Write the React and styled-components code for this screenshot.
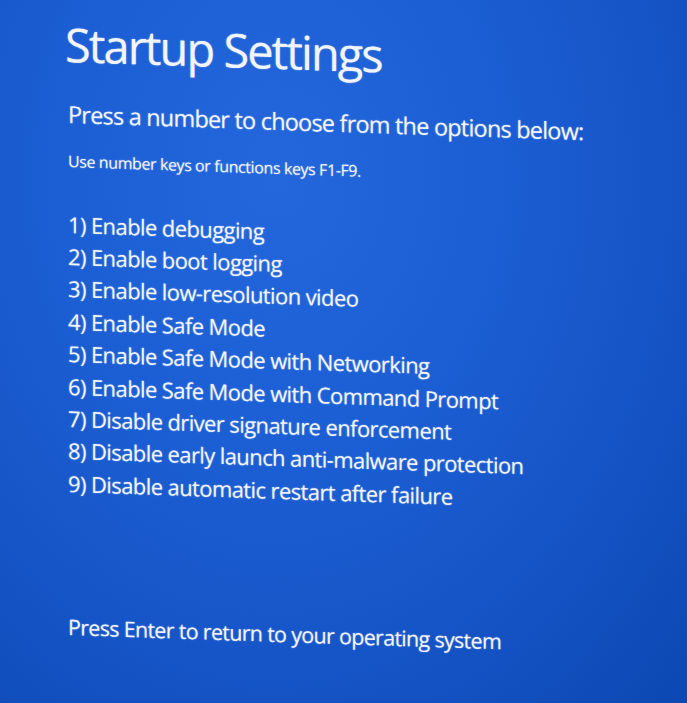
import React from 'react';
import styled, { createGlobalStyle } from 'styled-components';

const GlobalStyle = createGlobalStyle`
  html, body {
    margin: 0;
    padding: 0;
    background: #1557cc;
  }
  * {
    box-sizing: border-box;
  }
`

const Screen = styled.div`
  width: 687px;
  height: 703px;
  overflow: hidden;
  background:
    radial-gradient(ellipse at 40% 25%, #2467dc 0%, #1c5fd4 35%, #1655c8 65%, #0c48b2 100%);
  font-family: "Open Sans", "Noto Sans", sans-serif;
  color: #f1f4fb;
  text-shadow: 0 0 1.5px rgba(255, 255, 255, 0.5);
`

const Content = styled.div`
  display: flex;
  flex-direction: column;
  align-items: flex-start;
  padding: 21px 0 0 65px;
  transform: skewY(1.9deg);
  transform-origin: 66px 0;
`

const Title = styled.h1`
  margin: 0;
  font-size: 47px;
  font-weight: 400;
  letter-spacing: -2px;
  line-height: 1;
`

const Lead = styled.p`
  margin: 35px 0 0 3px;
  font-size: 23.5px;
  letter-spacing: -0.8px;
  line-height: 1;
`

const Hint = styled.p`
  margin: 26px 0 0 3px;
  font-size: 16px;
  letter-spacing: -0.4px;
  line-height: 1;
`

const OptionList = styled.ol`
  list-style: none;
  margin: 39px 0 0 3px;
  padding: 0;
  display: flex;
  flex-direction: column;
`

const Option = styled.li`
  font-size: 22px;
  letter-spacing: -0.6px;
  line-height: 32.4px;
`

const Footer = styled.p`
  margin: 117px 0 0 3px;
  font-size: 21.5px;
  letter-spacing: -0.7px;
  line-height: 1;
`

const options = [
  'Enable debugging',
  'Enable boot logging',
  'Enable low-resolution video',
  'Enable Safe Mode',
  'Enable Safe Mode with Networking',
  'Enable Safe Mode with Command Prompt',
  'Disable driver signature enforcement',
  'Disable early launch anti-malware protection',
  'Disable automatic restart after failure',
]

export default function App() {
  return (
    <Screen>
      <GlobalStyle />
      <Content>
        <Title>Startup Settings</Title>
        <Lead>Press a number to choose from the options below:</Lead>
        <Hint>Use number keys or functions keys F1-F9.</Hint>
        <OptionList>
          {options.map((label, i) => (
            <Option key={label}>{i + 1}) {label}</Option>
          ))}
        </OptionList>
        <Footer>Press Enter to return to your operating system</Footer>
      </Content>
    </Screen>
  )
}
